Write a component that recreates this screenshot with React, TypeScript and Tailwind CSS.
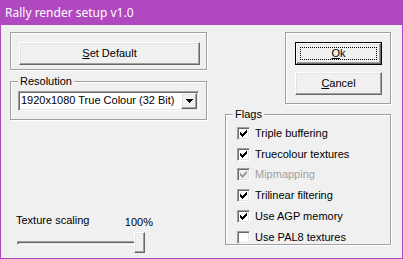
import React from "react";

const raised =
  "border border-t-white border-l-white border-r-[#696969] border-b-[#696969] shadow-[inset_-1px_-1px_0_#a0a0a0,inset_1px_1px_0_#e3e3e3] bg-[#f0f0f0]";
const sunken =
  "border border-t-[#a0a0a0] border-l-[#a0a0a0] border-r-white border-b-white shadow-[inset_1px_1px_0_#696969,inset_-1px_-1px_0_#e3e3e3]";
const etched = "relative border border-[#a0a0a0] shadow-[1px_1px_0_#fff,inset_1px_1px_0_#fff]";

const flags = [
  { label: "Triple buffering", checked: true },
  { label: "Truecolour textures", checked: true },
  { label: "Mipmapping", checked: true, disabled: true },
  { label: "Trilinear filtering", checked: true },
  { label: "Use AGP memory", checked: true },
  { label: "Use PAL8 textures", checked: false },
];

const Check: React.FC<{ color: string }> = ({ color }) => (
  <svg width="7" height="7" viewBox="0 0 7 7" shapeRendering="crispEdges">
    <path d="M0 2h1v1h1v1h1v-1h1v-1h1v-1h1v-1h1v3h-1v1h-1v1h-1v1h-1v1h-1v-1h-1v-1h-1v-1h-1z" fill={color} />
  </svg>
);

const Checkbox: React.FC<{ label: string; checked: boolean; disabled?: boolean }> = ({
  label,
  checked,
  disabled,
}) => (
  <div className="flex h-[20.8px] items-center">
    <div
      className={`${sunken} flex h-[13px] w-[13px] shrink-0 items-center justify-center ${
        disabled ? "bg-[#f0f0f0]" : "bg-white"
      }`}
    >
      {checked && <Check color={disabled ? "#a0a0a0" : "#000"} />}
    </div>
    <span className={`ml-[5px] ${disabled ? "text-[#a0a0a0]" : "text-black"}`}>{label}</span>
  </div>
);

const GroupLabel: React.FC<{ children: React.ReactNode }> = ({ children }) => (
  <span className="absolute left-[7px] top-[-7px] bg-[#f0f0f0] px-[2px] leading-[13px]">
    {children}
  </span>
);

const App: React.FC = () => {
  return (
    <div className="flex h-[259px] w-[403px] flex-col bg-[#f0f0f0] font-['Liberation_Sans',Arial,sans-serif] text-[11px] leading-[13px] text-black">
      <div className="flex h-[25px] shrink-0 items-center bg-[#b048c0] pl-[5px] font-['Noto_Sans',sans-serif] text-[12px] text-white">
        Rally render setup v1.0
      </div>
      <div className="flex flex-1 border-x border-b border-[#b048c0] pl-[9px] pt-[7px]">
        {/* left column */}
        <div className="flex w-[197px] flex-col">
          <div className={`${etched} h-[38px] pl-[8px] pt-[9px]`}>
            <button className={`${raised} flex h-[23px] w-[181px] items-center justify-center`}>
              <span>
                <u>S</u>et Default
              </span>
            </button>
          </div>

          <div className={`${etched} mt-[11px] h-[39px] pl-[7px] pt-[9px]`}>
            <GroupLabel>Resolution</GroupLabel>
            <div className={`${sunken} flex h-[20px] w-[181px] bg-white`}>
              <span className="flex-1 pl-[2px] pt-[2px]">1920x1080 True Colour (32 Bit)</span>
              <div className={`${raised} my-[1px] mr-[1px] flex h-[16px] w-[16px] items-center justify-center`}>
                <svg width="7" height="4" viewBox="0 0 7 4" shapeRendering="crispEdges">
                  <path d="M0 0h7v1h-1v1h-1v1h-1v1h-1v-1h-1v-1h-1v-1h-1z" fill="#000" />
                </svg>
              </div>
            </div>
          </div>

          <div className="ml-[6px] mt-[94px] flex w-[137px] justify-between">
            <span>Texture scaling</span>
            <span className="mt-[2px]">100%</span>
          </div>
          <div className="ml-[7px] mt-[3px] flex h-[21px] w-[128px] items-center">
            <div className={`${sunken} h-[4px] flex-1`} />
            <div className={`${raised} ml-[-3px] h-[21px] w-[11px]`} />
          </div>
        </div>

        {/* right column */}
        <div className="ml-[18px] flex w-[166px] flex-col">
          <div className={`${etched} ml-auto flex h-[72px] w-[106px] flex-col gap-[7px] pl-[9px] pt-[9px]`}>
            <div className="h-[23px] w-[87px] border border-black">
              <button className={`${raised} relative flex h-full w-full items-center justify-center`}>
                <span className="absolute inset-[3px] border border-dotted border-black" />
                <span>
                  <u>O</u>k
                </span>
              </button>
            </div>
            <button className={`${raised} flex h-[23px] w-[87px] items-center justify-center`}>
              <span>
                <u>C</u>ancel
              </span>
            </button>
          </div>

          <div className={`${etched} mt-[10px] h-[131px] pl-[11px] pt-[8px]`}>
            <GroupLabel>Flags</GroupLabel>
            {flags.map((f) => (
              <Checkbox key={f.label} label={f.label} checked={f.checked} disabled={f.disabled} />
            ))}
          </div>
        </div>
      </div>
    </div>
  );
};

export default App;
